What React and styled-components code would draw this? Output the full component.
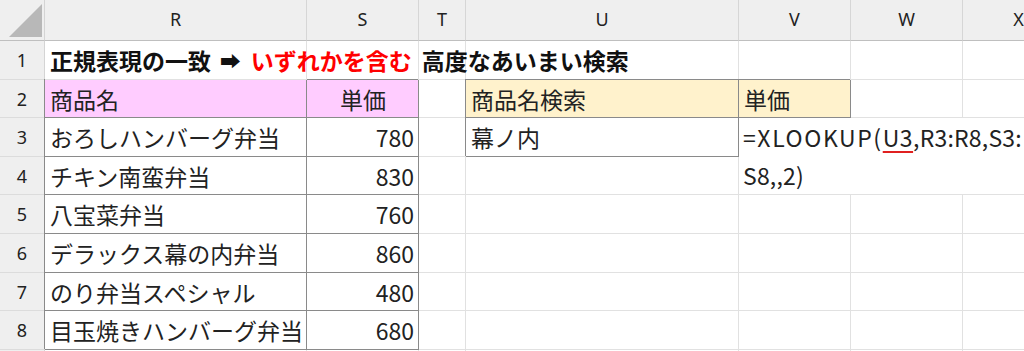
import React from 'react';
import styled, { createGlobalStyle, css } from 'styled-components';

const GlobalStyle = createGlobalStyle`
  html, body { margin: 0; padding: 0; background: #fff; overflow: hidden; }
  body { font-family: "Noto Sans CJK JP", "Noto Sans", sans-serif; }
`;

const COLS = [45, 262, 112, 47, 273, 112, 112, 112];
const ROWS = [41, 39, 38, 39, 38, 39, 39, 38, 39, 39];
const LETTERS = ['R', 'S', 'T', 'U', 'V', 'W', 'X'];

const GRID = '#e1e1e1';
const BOX = '#8a8a8a';

const Sheet = styled.div`
  display: grid;
  grid-template-columns: ${COLS.map((c) => `${c}px`).join(' ')};
  grid-template-rows: ${ROWS.map((r) => `${r}px`).join(' ')};
  width: 1024px;
  height: 351px;
  overflow: hidden;
  background: #fff;
`;

const Corner = styled.div`
  grid-column: 1;
  grid-row: 1;
  background: #efefef;
  border-right: 1px solid #d4d4d4;
  border-bottom: 1px solid #bfbfbf;
  box-sizing: border-box;
  display: flex;
  align-items: flex-end;
  justify-content: flex-end;
  padding: 0 2px 3px 0;
`;

const ColHeader = styled.div`
  grid-column: ${(p) => p.$col};
  grid-row: 1;
  background: #efefef;
  border-right: 1px solid #d6d6d6;
  border-bottom: 1px solid #bfbfbf;
  box-sizing: border-box;
  display: flex;
  align-items: center;
  justify-content: center;
  font-family: "Noto Sans", "Open Sans", sans-serif;
  font-size: 18px;
  color: #222;
  padding-bottom: 2px;
`;

const RowHeader = styled.div`
  grid-column: 1;
  grid-row: ${(p) => p.$row};
  background: #efefef;
  border-right: 1px solid #d4d4d4;
  border-bottom: 1px solid #dcdcdc;
  box-sizing: border-box;
  display: flex;
  align-items: center;
  justify-content: center;
  font-family: "Noto Sans", "Open Sans", sans-serif;
  font-size: 18px;
  color: #222;
`;

const Cell = styled.div`
  grid-column: ${(p) => p.$col};
  grid-row: ${(p) => p.$row};
  box-sizing: border-box;
  border-right: 1px solid ${GRID};
  border-bottom: 1px solid ${GRID};
  background: ${(p) => p.$fill || '#fff'};
  display: flex;
  align-items: center;
  justify-content: ${(p) => (p.$align === 'right' ? 'flex-end' : p.$align === 'center' ? 'center' : 'flex-start')};
  padding: 1px 4px 0 5px;
  font-size: 23px;
  line-height: 1;
  color: #222;
  white-space: nowrap;
  overflow: visible;
  ${(p) =>
    p.$boxed &&
    css`
      border-right-color: ${BOX};
      border-bottom-color: ${BOX};
      box-shadow: -1px -1px 0 0 ${BOX};
    `}
  ${(p) =>
    p.$title &&
    css`
      font-weight: 700;
      color: #111;
      z-index: 1;
    `}
`;

const TitleText = styled.span`
  flex-shrink: 0;
  display: inline-flex;
  align-items: center;
  white-space: nowrap;
`;

const Red = styled.span`
  color: #ff0000;
`;

const Arrow = styled.span`
  display: inline-block;
  margin: 0 10px 0 9px;
  font-size: 0.9em;
`;

const Gap = styled.span`
  display: inline-block;
  width: 10px;
  flex-shrink: 0;
`;

const FormulaCell = styled.div`
  grid-column: 6 / span 3;
  grid-row: 4 / span 2;
  box-sizing: border-box;
  border-bottom: 1px solid ${GRID};
  background: #fff;
  display: flex;
  flex-direction: column;
  padding: 0 0 0 4px;
  font-size: 23px;
  color: #222;
  white-space: nowrap;
  overflow: hidden;
`;

const FormulaLine = styled.div`
  height: ${(p) => p.$h}px;
  display: flex;
  align-items: center;
  letter-spacing: 0.2px;
  line-height: 1;
  padding-top: 1px;
`;

const Wide = styled.span`
  letter-spacing: 1.6px;
`;

const Squiggle = styled.span`
  letter-spacing: 0.5px;
  text-decoration: underline;
  text-decoration-color: #e02020;
  text-decoration-thickness: 2px;
  text-underline-offset: 4px;
`;

const products = [
  ['おろしハンバーグ弁当', 780],
  ['チキン南蛮弁当', 830],
  ['八宝菜弁当', 760],
  ['デラックス幕の内弁当', 860],
  ['のり弁当スペシャル', 480],
  ['目玉焼きハンバーグ弁当', 680],
];

const PINK = '#ffccff';
const CREAM = '#fff2cc';

export default function App() {
  const content = {};
  const key = (c, r) => `${c}-${r}`;
  content[key(2, 2)] = {
    title: true,
    node: (
      <TitleText>
        正規表現の一致<Arrow>➡</Arrow>
        <Red>いずれかを含む</Red>
        <Gap />
        高度なあいまい検索
      </TitleText>
    ),
  };
  content[key(2, 3)] = { node: '商品名', fill: PINK, boxed: true };
  content[key(3, 3)] = { node: '単価', fill: PINK, boxed: true, align: 'center' };
  products.forEach(([name, price], i) => {
    content[key(2, 4 + i)] = { node: name, boxed: true };
    content[key(3, 4 + i)] = { node: price, boxed: true, align: 'right' };
  });
  content[key(5, 3)] = { node: '商品名検索', fill: CREAM, boxed: true };
  content[key(6, 3)] = { node: '単価', fill: CREAM, boxed: true };
  content[key(5, 4)] = { node: '幕ノ内', boxed: true };

  const skip = (c, r) => c >= 6 && c <= 8 && (r === 4 || r === 5);

  const cells = [];
  for (let r = 2; r <= ROWS.length; r++) {
    for (let c = 2; c <= COLS.length; c++) {
      if (skip(c, r)) continue;
      const d = content[key(c, r)] || {};
      cells.push(
        <Cell
          key={key(c, r)}
          $col={c}
          $row={r}
          $fill={d.fill}
          $boxed={d.boxed}
          $align={d.align}
          $title={d.title}
        >
          {d.node}
        </Cell>
      );
    }
  }

  return (
    <>
      <GlobalStyle />
      <Sheet>
        <Corner>
          <svg width="33" height="33" viewBox="0 0 33 33">
            <polygon points="33,0 33,33 0,33" fill="#b8b8b8" />
          </svg>
        </Corner>
        {LETTERS.map((l, i) => (
          <ColHeader key={l} $col={i + 2}>
            {l}
          </ColHeader>
        ))}
        {ROWS.slice(1).map((_, i) => (
          <RowHeader key={i} $row={i + 2}>
            {i < 8 ? i + 1 : ''}
          </RowHeader>
        ))}
        {cells}
        <FormulaCell>
          <FormulaLine $h={39}>
            <Wide>=XLOOKUP(</Wide>
            <Squiggle>U3</Squiggle>,R3:R8,S3:
          </FormulaLine>
          <FormulaLine $h={38}>S8,,2)</FormulaLine>
        </FormulaCell>
      </Sheet>
    </>
  );
}
